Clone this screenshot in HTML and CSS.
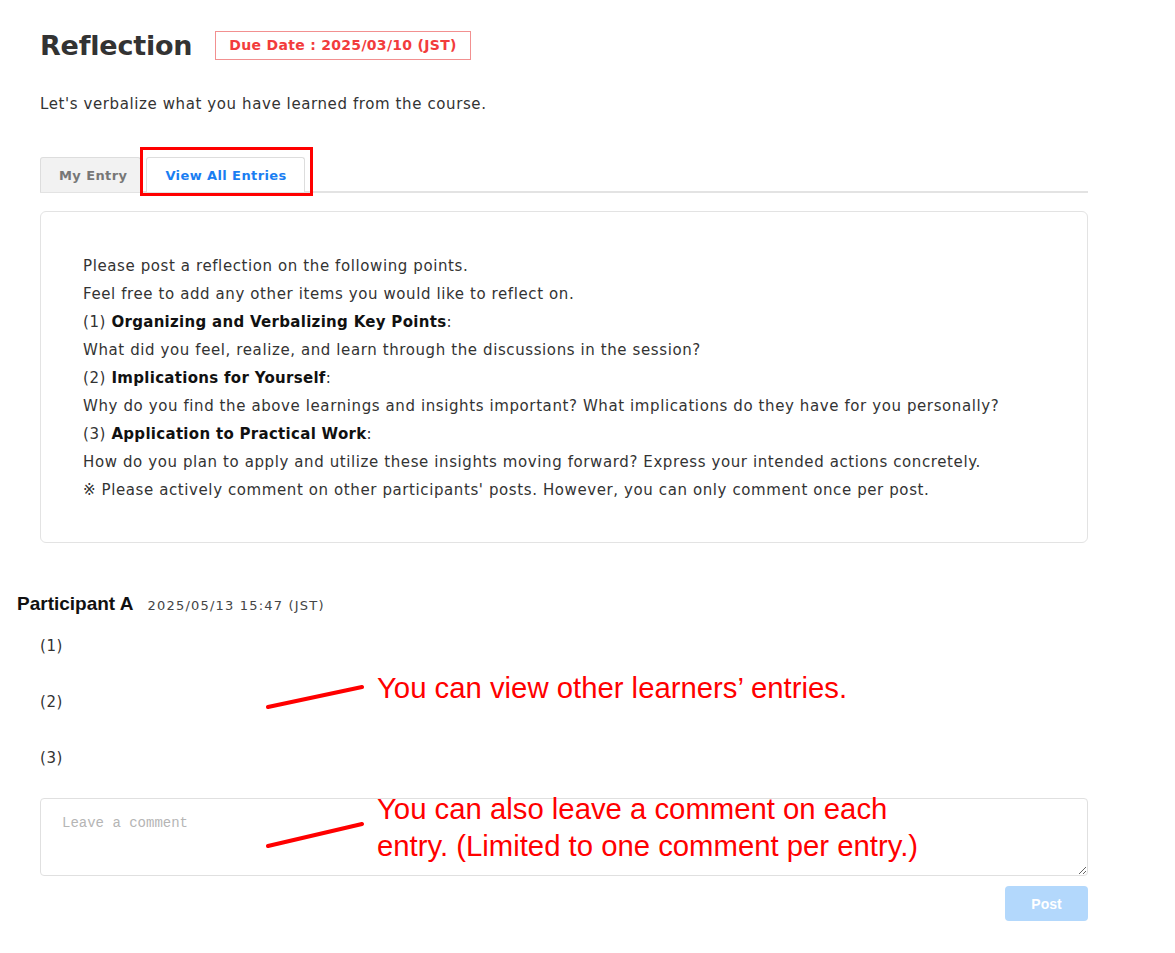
FILE: index.html
```html
<!DOCTYPE html>
<html lang="en">

<head>
    <meta charset="UTF-8">
    <title>Reflection</title>
    <link rel="stylesheet" href="styles.css">
</head>

<body>
    <div class="page">
        <div class="title-row">
            <h1>Reflection</h1>
            <span class="due-date">Due Date : 2025/03/10 (JST)</span>
        </div>
        <p class="lead">Let's verbalize what you have learned from the course.</p>

        <div class="tabs">
            <div class="tab">My Entry</div>
            <div class="tab active">View All Entries</div>
        </div>

        <div class="prompt-box">
            <p>Please post a reflection on the following points.</p>
            <p>Feel free to add any other items you would like to reflect on.</p>
            <p>(1) <strong>Organizing and Verbalizing Key Points</strong>:</p>
            <p>What did you feel, realize, and learn through the discussions in the session?</p>
            <p>(2) <strong>Implications for Yourself</strong>:</p>
            <p>Why do you find the above learnings and insights important? What implications do they have for you personally?</p>
            <p>(3) <strong>Application to Practical Work</strong>:</p>
            <p>How do you plan to apply and utilize these insights moving forward? Express your intended actions concretely.</p>
            <p>※ Please actively comment on other participants' posts. However, you can only comment once per post.</p>
        </div>

        <div class="entry">
            <div class="entry-head">
                <span class="entry-name">Participant A</span>
                <span class="entry-date">2025/05/13 15:47 (JST)</span>
            </div>
            <p class="answer">(1)</p>
            <p class="answer">(2)</p>
            <p class="answer">(3)</p>
            <textarea class="comment" placeholder="Leave a comment"></textarea>
            <div class="actions">
                <button class="post-btn" disabled>Post</button>
            </div>
        </div>
    </div>

    <!-- callouts drawn over the screenshot -->
    <div class="note note-view">
        <svg class="note-line" width="100" height="26" viewBox="0 0 100 26">
            <line x1="2" y1="23" x2="96" y2="3" />
        </svg>
        <div class="note-text">You can view other learners’ entries.</div>
    </div>
    <div class="note note-comment">
        <svg class="note-line" width="100" height="28" viewBox="0 0 100 28">
            <line x1="2" y1="25" x2="96" y2="3" />
        </svg>
        <div class="note-text">You can also leave a comment on each<br>entry. (Limited to one comment per entry.)</div>
    </div>
</body>

</html>
```

FILE: styles.css
```css
body {
    margin: 0;
    font-family: "DejaVu Sans", Verdana, sans-serif;
    color: #333;
    background: #fff;
    position: relative;
}

.page {
    width: 1048px;
    padding: 30px 0 0 40px;
}

.title-row {
    display: flex;
    align-items: center;
    gap: 23px;
}

h1 {
    margin: 0;
    font-size: 27px;
    font-weight: bold;
    color: #333;
    letter-spacing: -0.2px;
}

.due-date {
    border: 1px solid #f29090;
    color: #f23c3c;
    font-size: 14px;
    font-weight: bold;
    letter-spacing: 0.3px;
    padding: 5px 13px 6px 13px;
}

.lead {
    margin: 33px 0 0;
    font-size: 15px;
    line-height: 20px;
    letter-spacing: 0.6px;
}

.tabs {
    display: flex;
    gap: 5px;
    margin-top: 43px;
    border-bottom: 2px solid #e3e3e3;
}

.tab {
    font-size: 13px;
    font-weight: bold;
    letter-spacing: 0.4px;
    color: #777;
    background: #f2f2f2;
    border: 1px solid #ddd;
    border-bottom: none;
    border-radius: 3px 3px 0 0;
    padding: 10px 13px 9px 18px;
    margin-bottom: -1px;
}

.tab.active {
    position: relative;
    color: #1a7ef2;
    background: #fff;
    padding: 10px 17px 9px 18px;
}

.tab.active::after {
    content: "";
    position: absolute;
    top: -11px;
    right: -9px;
    bottom: -4px;
    left: -7px;
    border: 3px solid #f00;
}

.prompt-box {
    margin-top: 18px;
    border: 1px solid #e3e3e3;
    border-radius: 6px;
    padding: 40px 20px 38px 42px;
}

.prompt-box p {
    margin: 0;
    font-size: 15px;
    line-height: 28px;
    letter-spacing: 0.6px;
    color: #333;
}

.prompt-box strong {
    color: #111;
    letter-spacing: 0.3px;
}

.entry {
    margin-top: 50px;
}

.entry-head {
    display: flex;
    align-items: baseline;
    gap: 14px;
    margin-left: -23px;
}

.entry-name {
    font-family: "Liberation Sans", Arial, sans-serif;
    font-size: 19px;
    font-weight: bold;
    color: #111;
}

.entry-date {
    font-size: 13px;
    letter-spacing: 1.2px;
    color: #444;
}

.answer {
    margin: 0;
    font-size: 15px;
    line-height: 20px;
    letter-spacing: 0.6px;
    color: #333;
}

.entry-head + .answer {
    margin-top: 21px;
}

.answer + .answer {
    margin-top: 36px;
}

.comment {
    display: block;
    box-sizing: border-box;
    width: 100%;
    height: 78px;
    margin-top: 30px;
    padding: 16px 21px;
    font-family: "Liberation Mono", monospace;
    font-size: 14px;
    border: 1px solid #e0e0e0;
    border-radius: 4px;
    resize: vertical;
}

.comment::placeholder {
    color: #b5b5b5;
}

.actions {
    display: flex;
    justify-content: flex-end;
    margin-top: 10px;
}

.post-btn {
    width: 83px;
    height: 35px;
    border: none;
    border-radius: 4px;
    background: #b3d8fc;
    color: #fff;
    font-family: "Liberation Sans", Arial, sans-serif;
    font-size: 14px;
    font-weight: bold;
}

.note {
    position: absolute;
    left: 266px;
    display: flex;
    align-items: flex-start;
    gap: 11px;
    color: #f00;
    font-family: "Liberation Sans", Arial, sans-serif;
    font-size: 29.3px;
    line-height: 37px;
    pointer-events: none;
}

.note-line line {
    stroke: #f00;
    stroke-width: 4;
    stroke-linecap: round;
}

.note-view {
    top: 669px;
}

.note-view .note-line {
    margin-top: 15px;
}

.note-comment {
    top: 790px;
}

.note-comment .note-line {
    margin-top: 31px;
}
```
